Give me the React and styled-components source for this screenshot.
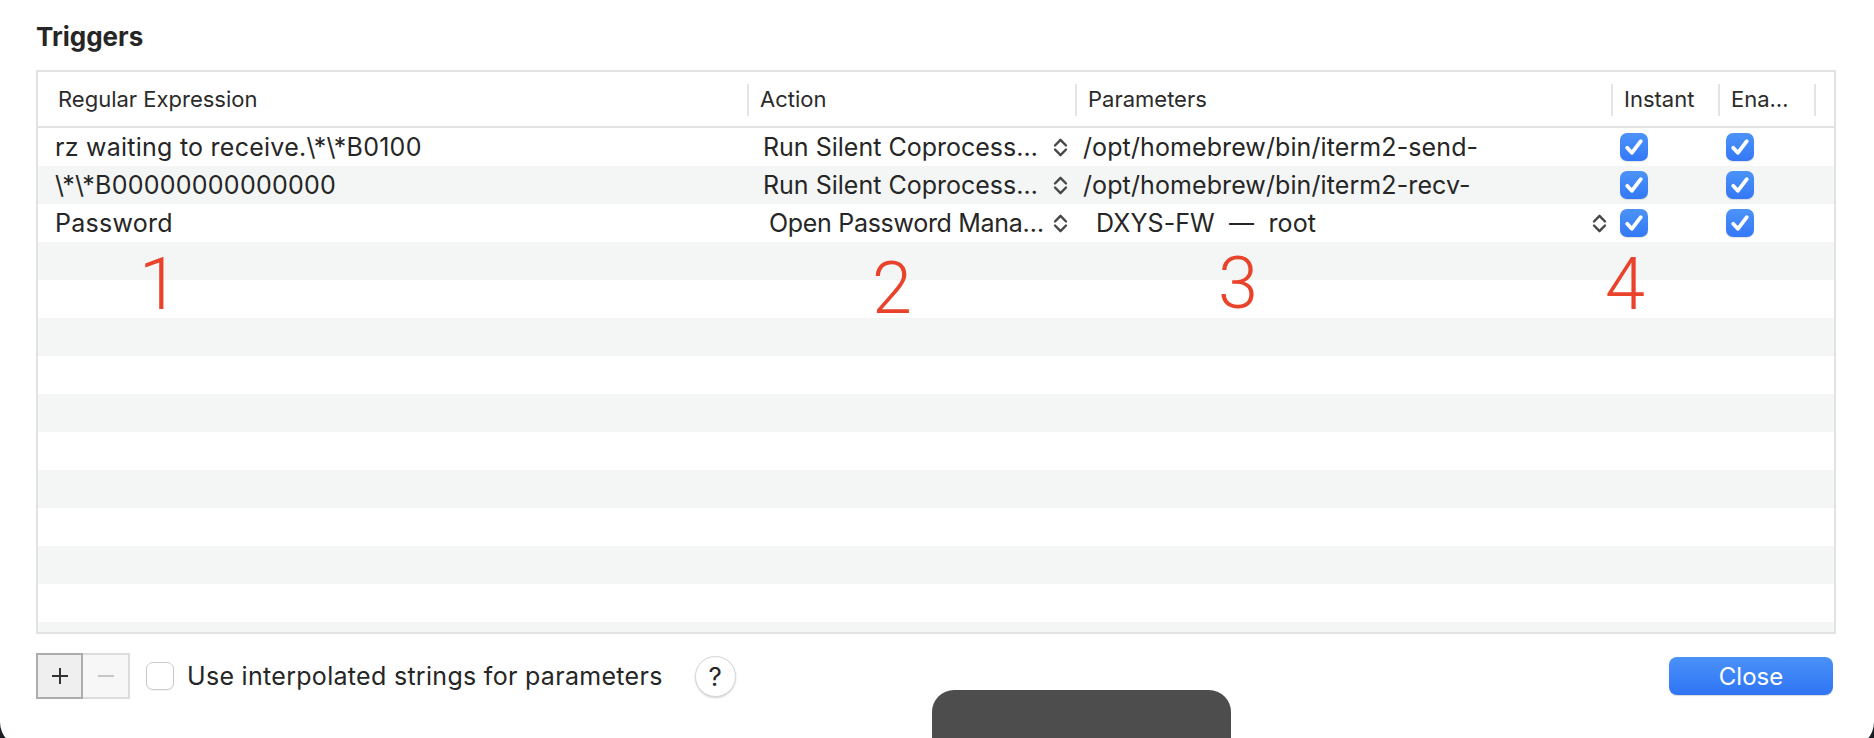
import React from 'react'
import styled, { createGlobalStyle } from 'styled-components'

const GlobalStyle = createGlobalStyle`
    html, body {
        margin: 0;
        padding: 0;
        overflow: hidden;
        background: #1a1f26;
    }
    body {
        font-family: "Inter", "Liberation Sans", sans-serif;
        color: #262626;
    }
`

const COLUMNS = '709px 328px 536px 107px 96px 1fr'

const Window = styled.div`
    position: relative;
    box-sizing: border-box;
    width: 1874px;
    height: 748px;
    padding: 22px 38px 0 36px;
    display: flex;
    flex-direction: column;
    background: #ffffff;
    border-radius: 0 0 26px 26px;
    overflow: hidden;
`

const Title = styled.h2`
    margin: 0 0 18px 0;
    font-size: 26px;
    line-height: 30px;
    font-weight: 700;
    color: #262626;
`

const TableFrame = styled.div`
    box-sizing: border-box;
    height: 564px;
    border: 2px solid #e2e2e2;
    overflow: hidden;
`

const HeaderRow = styled.div`
    display: grid;
    grid-template-columns: ${COLUMNS};
    height: 54px;
    border-bottom: 2px solid #e2e2e2;
`

const HeaderCell = styled.div`
    position: relative;
    display: flex;
    align-items: center;
    padding-left: ${p => (p.$divider ? '13px' : '20px')};
    font-size: 22px;
    color: #2b2b2b;
    white-space: nowrap;

    &::before {
        content: '';
        display: ${p => (p.$divider ? 'block' : 'none')};
        position: absolute;
        left: 0;
        top: 12px;
        bottom: 10px;
        width: 2px;
        background: #e4e4e4;
    }
`

const Row = styled.div`
    display: grid;
    grid-template-columns: ${COLUMNS};
    height: 38px;
    background: ${p => (p.$striped ? '#f4f5f5' : '#ffffff')};
`

const Cell = styled.div`
    display: flex;
    align-items: center;
    min-width: 0;
    padding-left: ${p => p.$pad || 0}px;
    padding-right: ${p => p.$padRight || 0}px;
    font-size: 25px;
    letter-spacing: ${p => p.$spacing ?? 0.25}px;
    color: #262626;
    white-space: pre;
    overflow: hidden;
`

const PopupText = styled.span`
    flex: 1;
    overflow: hidden;
`

const StepperIcon = () => (
    <svg width="15" height="21" viewBox="0 0 15 21" fill="none">
        <path d="M2 8.5 L7.5 2.8 L13 8.5" stroke="#484848" strokeWidth="2.4" strokeLinecap="round" strokeLinejoin="round" />
        <path d="M2 12.5 L7.5 18.2 L13 12.5" stroke="#484848" strokeWidth="2.4" strokeLinecap="round" strokeLinejoin="round" />
    </svg>
)

const CheckBox = styled.span`
    box-sizing: border-box;
    display: inline-flex;
    align-items: center;
    justify-content: center;
    flex-shrink: 0;
    width: 28px;
    height: 28px;
    margin-left: ${p => p.$offset || 0}px;
    border-radius: 7px;
    background: ${p => (p.$checked ? 'linear-gradient(#4c93f8, #3478f6)' : '#ffffff')};
    border: ${p => (p.$checked ? 'none' : '1.5px solid #cacaca')};
    box-shadow: ${p => (p.$checked ? '0 1px 1px rgba(0,0,0,0.12)' : '0 1px 1px rgba(0,0,0,0.05)')};
`

const Tick = () => (
    <svg width="28" height="28" viewBox="0 0 28 28" fill="none">
        <path d="M7.2 14.8 L11.8 19.8 L20.8 8.2" stroke="#ffffff" strokeWidth="3.8" strokeLinecap="round" strokeLinejoin="round" />
    </svg>
)

const Annotation = styled.span`
    position: absolute;
    font-family: "Roboto", "Liberation Sans", sans-serif;
    font-weight: 300;
    font-size: 72px;
    line-height: 72px;
    color: #e9432b;
`

const Footer = styled.div`
    display: flex;
    align-items: center;
    height: 84px;
`

const Segmented = styled.div`
    display: flex;
    height: 46px;
`

const SegButton = styled.button`
    box-sizing: border-box;
    width: 47px;
    height: 46px;
    padding: 0;
    display: flex;
    align-items: center;
    justify-content: center;
    background: ${p => (p.$disabled ? '#f7f7f7' : '#efefef')};
    border: 2px solid ${p => (p.$disabled ? '#dcdcdc' : '#adadad')};
    border-left-width: ${p => (p.$disabled ? '0' : '2px')};
`

const Glyph = ({ minus, color }) => (
    <svg width="20" height="20" viewBox="0 0 20 20">
        <path d="M2 10 H18" stroke={color} strokeWidth="2" />
        {!minus && <path d="M10 2 V18" stroke={color} strokeWidth="2" />}
    </svg>
)

const OptionLabel = styled.span`
    margin-left: 13px;
    font-size: 25px;
    letter-spacing: 0.3px;
    color: #262626;
`

const HelpButton = styled.button`
    box-sizing: border-box;
    width: 41px;
    height: 41px;
    margin-left: 32px;
    padding: 0;
    border-radius: 50%;
    border: 1px solid #d6d6d6;
    background: #ffffff;
    box-shadow: 0 1px 2px rgba(0,0,0,0.18);
    font-family: "Inter", "Liberation Sans", sans-serif;
    font-size: 26px;
    color: #262626;
`

const Spacer = styled.div`
    flex: 1;
`

const CloseButton = styled.button`
    width: 164px;
    height: 38px;
    margin-right: 3px;
    border: none;
    border-radius: 8px;
    background: linear-gradient(#4a91f8, #2f75f5);
    box-shadow: 0 1px 1px rgba(0,0,0,0.15);
    font-family: "Inter", "Liberation Sans", sans-serif;
    font-size: 24px;
    color: #ffffff;
`

const Hud = styled.div`
    position: absolute;
    left: 932px;
    top: 690px;
    width: 299px;
    height: 70px;
    border-radius: 22px 22px 0 0;
    background: #4d4d4d;
`

const triggers = [
    { regex: 'rz waiting to receive.\\*\\*B0100', action: 'Run Silent Coprocess…', params: '/opt/homebrew/bin/iterm2-send-' },
    { regex: '\\*\\*B00000000000000', action: 'Run Silent Coprocess…', params: '/opt/homebrew/bin/iterm2-recv-' },
    { regex: 'Password', action: 'Open Password Mana…', params: 'DXYS-FW  —  root', popup: true },
]

const annotations = [
    { n: '1', left: 139, top: 249 },
    { n: '2', left: 872, top: 253 },
    { n: '3', left: 1218, top: 248 },
    { n: '4', left: 1605, top: 249 },
]

export default function App() {
    const rows = Array.from({ length: 15 }, (_, i) => triggers[i] || null)

    return (
        <Window>
            <GlobalStyle />
            <Title>Triggers</Title>
            <TableFrame>
                <HeaderRow>
                    <HeaderCell>Regular Expression</HeaderCell>
                    <HeaderCell $divider>Action</HeaderCell>
                    <HeaderCell $divider>Parameters</HeaderCell>
                    <HeaderCell $divider>Instant</HeaderCell>
                    <HeaderCell $divider>Ena…</HeaderCell>
                    <HeaderCell $divider />
                </HeaderRow>
                {rows.map((t, i) => (
                    <Row key={i} $striped={i % 2 === 1}>
                        {t ? (
                            <>
                                <Cell $pad={17}>{t.regex}</Cell>
                                <Cell $pad={t.popup ? 22 : 16} $padRight={7} $spacing={t.popup ? -0.3 : 0}>
                                    <PopupText>{t.action}</PopupText>
                                    <StepperIcon />
                                </Cell>
                                <Cell $pad={t.popup ? 21 : 8} $padRight={4} $spacing={0.1}>
                                    <PopupText>{t.params}</PopupText>
                                    {t.popup && <StepperIcon />}
                                </Cell>
                                <Cell $pad={9}>
                                    <CheckBox $checked><Tick /></CheckBox>
                                </Cell>
                                <Cell $pad={8}>
                                    <CheckBox $checked><Tick /></CheckBox>
                                </Cell>
                                <Cell />
                            </>
                        ) : null}
                    </Row>
                ))}
            </TableFrame>
            <Footer>
                <Segmented>
                    <SegButton><Glyph color="#333333" /></SegButton>
                    <SegButton $disabled><Glyph minus color="#c6c6c6" /></SegButton>
                </Segmented>
                <CheckBox $offset={16} />
                <OptionLabel>Use interpolated strings for parameters</OptionLabel>
                <HelpButton>?</HelpButton>
                <Spacer />
                <CloseButton>Close</CloseButton>
            </Footer>
            {annotations.map(a => (
                <Annotation key={a.n} style={{ left: a.left, top: a.top }}>{a.n}</Annotation>
            ))}
            <Hud />
        </Window>
    )
}
